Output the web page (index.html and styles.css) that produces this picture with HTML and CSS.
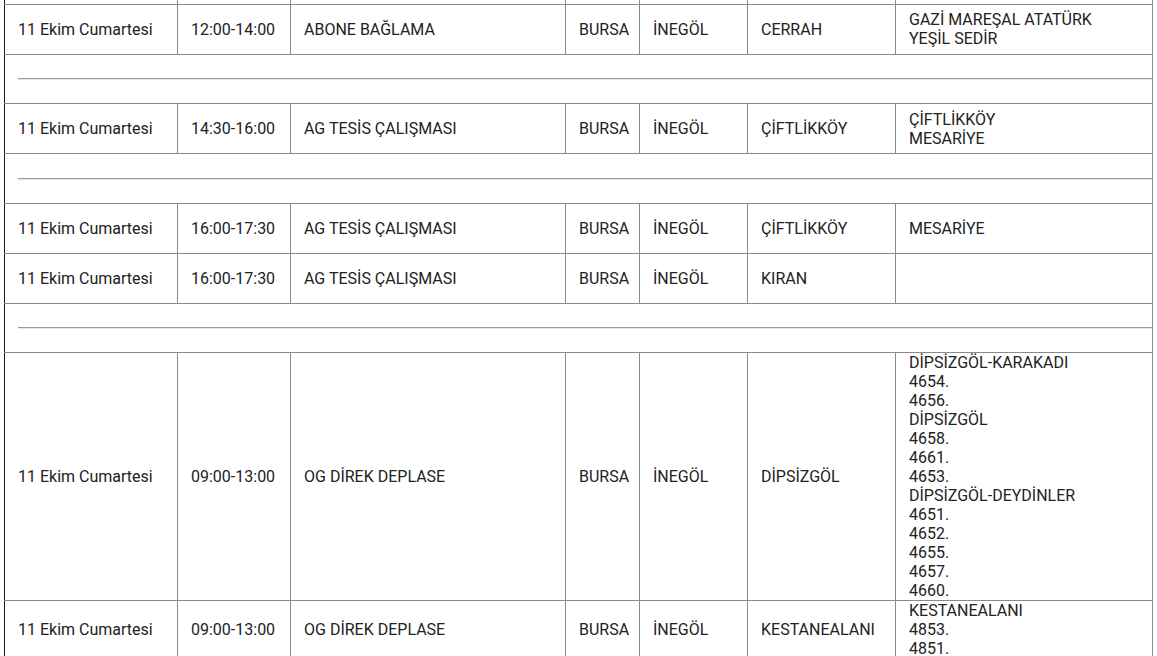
FILE: index.html
```html
<!DOCTYPE html>
<html lang="tr">
<head>
<meta charset="utf-8">
<title>Planlı Kesintiler</title>
<link rel="stylesheet" href="styles.css">
</head>
<body>
<div class="wrap">
<table class="outages">
<colgroup>
<col class="c-date"><col class="c-time"><col class="c-work"><col class="c-city"><col class="c-dist"><col class="c-hood"><col class="c-streets">
</colgroup>
<tbody>
<tr class="row prev">
<td></td><td></td><td></td><td></td><td></td><td></td><td></td>
</tr>
<tr class="row">
<td>11 Ekim Cumartesi</td><td>12:00-14:00</td><td>ABONE BAĞLAMA</td><td>BURSA</td><td>İNEGÖL</td><td>CERRAH</td><td>GAZİ MAREŞAL ATATÜRK<br>YEŞİL SEDİR</td>
</tr>
<tr class="spacer"><td colspan="7"><hr></td></tr>
<tr class="row">
<td>11 Ekim Cumartesi</td><td>14:30-16:00</td><td>AG TESİS ÇALIŞMASI</td><td>BURSA</td><td>İNEGÖL</td><td>ÇİFTLİKKÖY</td><td>ÇİFTLİKKÖY<br>MESARİYE</td>
</tr>
<tr class="spacer"><td colspan="7"><hr></td></tr>
<tr class="row">
<td>11 Ekim Cumartesi</td><td>16:00-17:30</td><td>AG TESİS ÇALIŞMASI</td><td>BURSA</td><td>İNEGÖL</td><td>ÇİFTLİKKÖY</td><td>MESARİYE</td>
</tr>
<tr class="row">
<td>11 Ekim Cumartesi</td><td>16:00-17:30</td><td>AG TESİS ÇALIŞMASI</td><td>BURSA</td><td>İNEGÖL</td><td>KIRAN</td><td></td>
</tr>
<tr class="spacer"><td colspan="7"><hr></td></tr>
<tr class="row">
<td>11 Ekim Cumartesi</td><td>09:00-13:00</td><td>OG DİREK DEPLASE</td><td>BURSA</td><td>İNEGÖL</td><td>DİPSİZGÖL</td><td>DİPSİZGÖL-KARAKADI<br>4654.<br>4656.<br>DİPSİZGÖL<br>4658.<br>4661.<br>4653.<br>DİPSİZGÖL-DEYDİNLER<br>4651.<br>4652.<br>4655.<br>4657.<br>4660.</td>
</tr>
<tr class="row">
<td>11 Ekim Cumartesi</td><td>09:00-13:00</td><td>OG DİREK DEPLASE</td><td>BURSA</td><td>İNEGÖL</td><td>KESTANEALANI</td><td>KESTANEALANI<br>4853.<br>4851.</td>
</tr>
</tbody>
</table>
</div>
</body>
</html>
```
FILE: styles.css
```css
html, body {
  margin: 0;
  padding: 0;
  background: #fff;
}

.wrap {
  padding-left: 4px;
}

.outages {
  border-collapse: collapse;
  table-layout: fixed;
  width: 1148px;
  margin-top: -46px;
  font-family: Roboto, "Liberation Sans", Arial, sans-serif;
  font-size: 16px;
  line-height: 19px;
  color: #222;
}

.c-date { width: 173px; }
.c-time { width: 113px; }
.c-work { width: 275px; }
.c-city { width: 74px; }
.c-dist { width: 108px; }
.c-hood { width: 148px; }
.c-streets { width: 257px; }

.outages td {
  border: 1px solid #8a8a8a;
  padding: 0 13px;
  height: 48.8px;
  vertical-align: middle;
  white-space: nowrap;
  overflow: hidden;
}

.outages td:first-child {
  border-left-color: #1a1a1a;
}

.spacer td {
  padding: 0 0 0 13px;
}

.spacer hr {
  margin: 0;
  height: 0;
  border: 0;
  border-top: 1px solid #9a9a9a;
  border-bottom: 1px solid #e6e6e6;
}
```
